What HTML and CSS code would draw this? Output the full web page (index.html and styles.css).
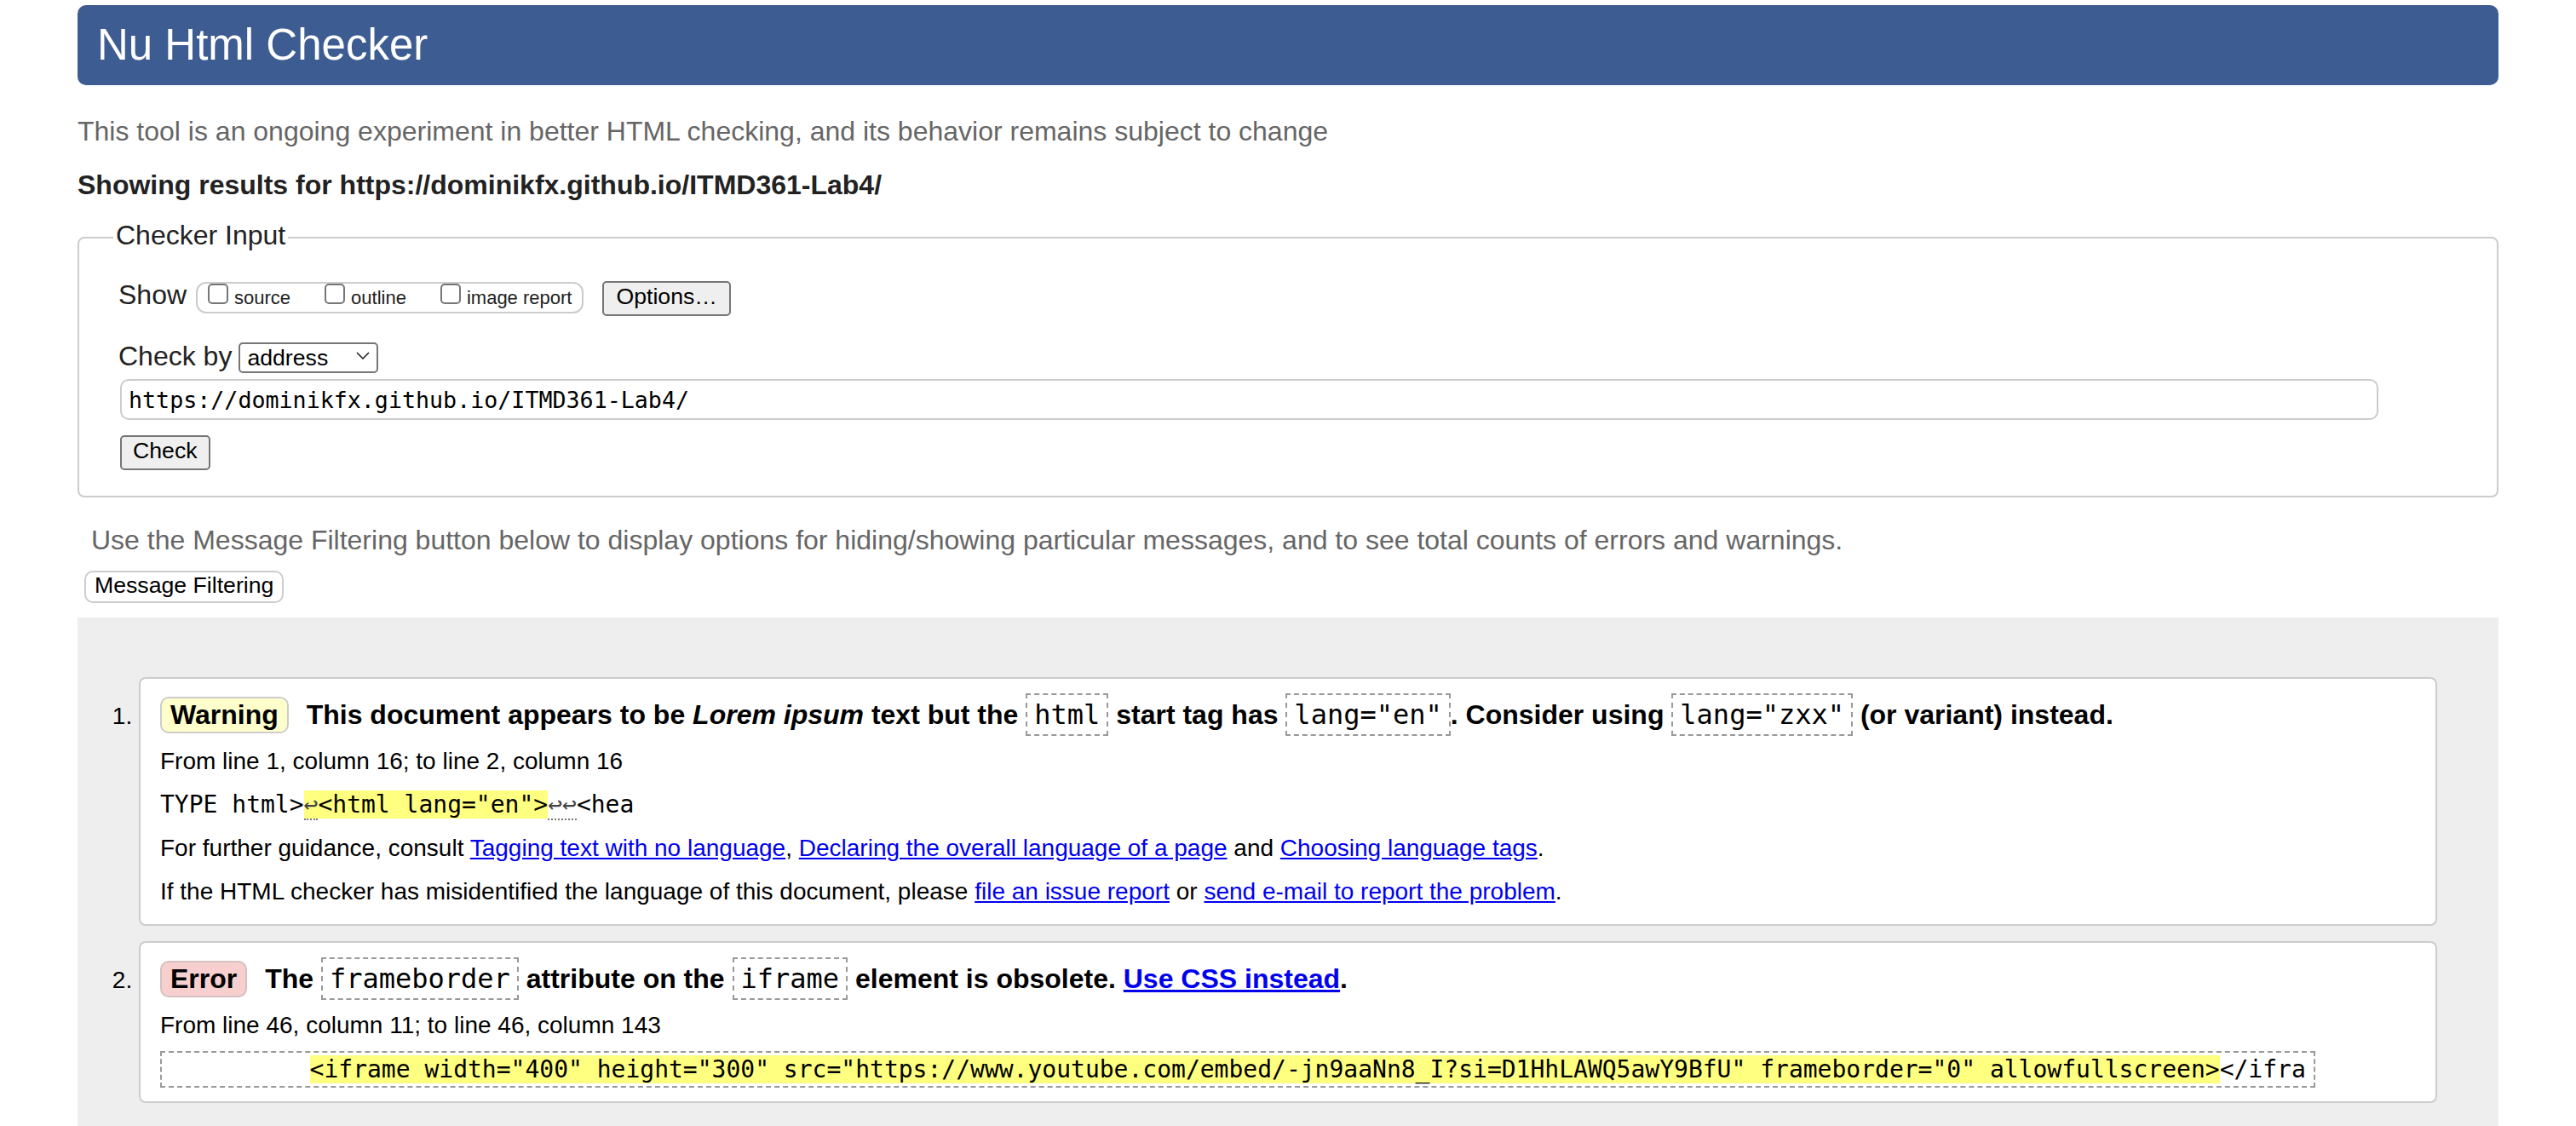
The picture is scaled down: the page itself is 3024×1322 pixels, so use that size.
FILE: index.html
```html
<!DOCTYPE html>
<html lang="en">
<head>
<meta charset="utf-8">
<title>Showing results for https://dominikfx.github.io/ITMD361-Lab4/ - Nu Html Checker</title>
<link rel="stylesheet" href="styles.css">
</head>
<body>
<div class="page">
  <h1 class="title">Nu Html Checker</h1>
  <p class="intro">This tool is an ongoing experiment in better HTML checking, and its behavior remains subject to change</p>
  <p class="showing">Showing results for https://dominikfx.github.io/ITMD361-Lab4/</p>

  <form class="checker-form">
    <fieldset class="checker">
      <legend class="checker-legend">Checker Input</legend>
      <div class="row show-row">
        <span class="lbl">Show</span>
        <span class="group">
          <label class="opt"><input class="cb" type="checkbox">source</label><label class="opt"><input class="cb" type="checkbox">outline</label><label class="opt last"><input class="cb" type="checkbox">image report</label>
        </span>
        <button type="button" class="btn">Options…</button>
      </div>
      <div class="row by-row">
        <span class="lbl">Check by</span>
        <span class="select-wrap">
          <select class="select"><option>address</option></select>
          <svg class="chev" width="16" height="9" viewBox="0 0 16 9"><polyline points="1,1 8,8 15,1" fill="none" stroke="#222" stroke-width="1.6"/></svg>
        </span>
      </div>
      <input class="url" type="url" value="https://dominikfx.github.io/ITMD361-Lab4/">
      <button type="button" class="btn check">Check</button>
    </fieldset>
  </form>

  <p class="filter-note">Use the Message Filtering button below to display options for hiding/showing particular messages, and to see total counts of errors and warnings.</p>
  <button type="button" class="filter-btn">Message Filtering</button>

  <div class="results">
    <ol class="messages">
      <li class="card">
        <p class="msg-title"><span class="badge warning">Warning</span> This document appears to be <em>Lorem ipsum</em> text but the <code class="code">html</code> start tag has <code class="code">lang="en"</code>. Consider using <code class="code">lang="zxx"</code> (or variant) instead.</p>
        <p class="details">From line 1, column 16; to line 2, column 16</p>
        <p class="details extract-line"><code class="mono">TYPE html&gt;<span class="hl"><span class="lf">↩</span>&lt;html lang="en"&gt;</span><span class="lf">↩↩</span>&lt;hea</code></p>
        <p class="details">For further guidance, consult <a href="#">Tagging text with no language</a>, <a href="#">Declaring the overall language of a page</a> and <a href="#">Choosing language tags</a>.</p>
        <p class="details last">If the HTML checker has misidentified the language of this document, please <a href="#">file an issue report</a> or <a href="#">send e-mail to report the problem</a>.</p>
      </li>
      <li class="card">
        <p class="msg-title"><span class="badge error">Error</span> The <code class="code">frameborder</code> attribute on the <code class="code">iframe</code> element is obsolete. <a href="#">Use CSS instead</a>.</p>
        <p class="details">From line 46, column 11; to line 46, column 143</p>
        <code class="extract">          <span class="hl">&lt;iframe width="400" height="300" src="https://www.youtube.com/embed/-jn9aaNn8_I?si=D1HhLAWQ5awY9BfU" frameborder="0" allowfullscreen&gt;</span>&lt;/ifra</code>
      </li>
    </ol>
  </div>
</div>
</body>
</html>
```
FILE: styles.css
```css
* { box-sizing: border-box; }
html, body { margin: 0; padding: 0; background: #fff; }
body {
  font-family: "Liberation Sans", Arial, Helvetica, sans-serif;
  font-size: 32px;
  color: #000;
}
.page { padding: 6px 91px 0; }

.title {
  margin: 0;
  background: #3d5c92;
  color: #fff;
  font-size: 51px;
  font-weight: normal;
  line-height: 94px;
  padding-left: 23px;
  border-radius: 10px;
}
.intro { margin: 36px 0 0; line-height: 36px; color: #666; }
.showing { margin: 27px 0 0; line-height: 36px; font-weight: bold; color: #222; }

.checker-form { margin: 0; }
.checker {
  margin: 23px 0 0;
  border: 2px solid #ccc;
  border-radius: 8px;
  padding: 30px 46px 30px;
  min-width: 0;
}
.checker-legend {
  padding: 0 3px 6px;
  margin-left: -6px;
  line-height: 36px;
  font-size: 32px;
  color: #222;
}
.row { display: flex; align-items: baseline; }
.lbl { line-height: 32px; color: #222; }
.show-row .lbl { margin-right: 11px; }
.by-row { margin-top: 29px; }
.by-row .lbl { margin-right: 8px; }

.group {
  display: inline-block;
  border: 2px solid #ccc;
  border-radius: 12px;
  padding: 0 12px;
  font-size: 22px;
  line-height: 33px;
  color: #222;
  margin-right: 22px;
}
.opt { margin-right: 40px; }
.opt.last { margin-right: 0; }
.cb {
  -webkit-appearance: none;
  appearance: none;
  width: 24px;
  height: 24px;
  margin: 0 7px 0 0;
  border: 2px solid #767676;
  border-radius: 5px;
  background: #fff;
  vertical-align: baseline;
}

.btn {
  font-family: "Liberation Sans", Arial, sans-serif;
  font-size: 26.67px;
  color: #000;
  background: #efefef;
  border: 2px solid #767676;
  border-radius: 5px;
  line-height: 33px;
  padding: 0 14px 4px;
  height: 41px;
}
.check { display: block; margin: 18px 0 0 2px; padding: 0 13px 4px; }

.select-wrap { position: relative; display: inline-block; }
.select {
  -webkit-appearance: none;
  appearance: none;
  font-family: "Liberation Sans", Arial, sans-serif;
  font-size: 26.67px;
  color: #000;
  width: 164px;
  height: 36px;
  line-height: 32px;
  padding: 0 8px;
  border: 2px solid #767676;
  border-radius: 5px;
  background: #fff;
}
.chev { position: absolute; right: 10px; top: 13px; pointer-events: none; }

.url {
  display: block;
  margin: 7px 0 0 2px;
  width: calc(100% - 95px);
  height: 48px;
  border: 2px solid #ccc;
  border-radius: 10px;
  padding: 0 8px;
  font-family: "DejaVu Sans Mono", "Liberation Mono", monospace;
  font-size: 26.67px;
  color: #000;
  background: #fff;
}

.filter-note { margin: 32px 0 0 16px; line-height: 36px; color: #666; }
.filter-btn {
  display: block;
  margin: 18px 0 0 8px;
  font-family: "Liberation Sans", Arial, sans-serif;
  font-size: 26.67px;
  color: #000;
  background: #fff;
  border: 2px solid #ccc;
  border-radius: 10px;
  line-height: 30px;
  height: 38px;
  padding: 0 10px 4px;
}

.results {
  margin-top: 17px;
  background: #eee;
  padding: 70px 72px 40px;
}
.messages { margin: 0; padding: 0; font-size: 28px; }
.card {
  background: #fff;
  border: 2px solid #ccc;
  border-radius: 8px;
  padding: 21px 23px 16px;
  margin-bottom: 18px;
}
.msg-title { margin: 0; font-size: 32px; font-weight: bold; line-height: 43px; }
.badge {
  display: inline-block;
  line-height: 39px;
  padding: 0 10px;
  border: 2px solid #ccc;
  border-radius: 10px;
  margin-right: 12px;
}
.badge.warning { background: #ffffcc; }
.badge.error { background: #f8cfcf; border-color: #d6c0c0; }
.code {
  font-family: "DejaVu Sans Mono", "Liberation Mono", monospace;
  font-weight: normal;
  font-size: 32px;
  border: 2px dashed #999;
  padding: 4px 8px;
}
.details { margin: 15px 0 0; line-height: 36px; }
.details.last { margin-bottom: 4px; }
.mono {
  font-family: "DejaVu Sans Mono", "Liberation Mono", monospace;
  font-size: 28px;
  white-space: pre;
}
.hl { background: #ffff80; }
.lf { color: #444; border-bottom: 2px dotted #777; }
a { color: #0000ee; text-decoration: underline; }

.extract {
  display: block;
  width: fit-content;
  margin-top: 12px;
  border: 2px dashed #999;
  padding: 1px 9px 1px 5px;
  font-family: "DejaVu Sans Mono", "Liberation Mono", monospace;
  font-size: 28px;
  line-height: 37px;
  white-space: pre;
}
```
